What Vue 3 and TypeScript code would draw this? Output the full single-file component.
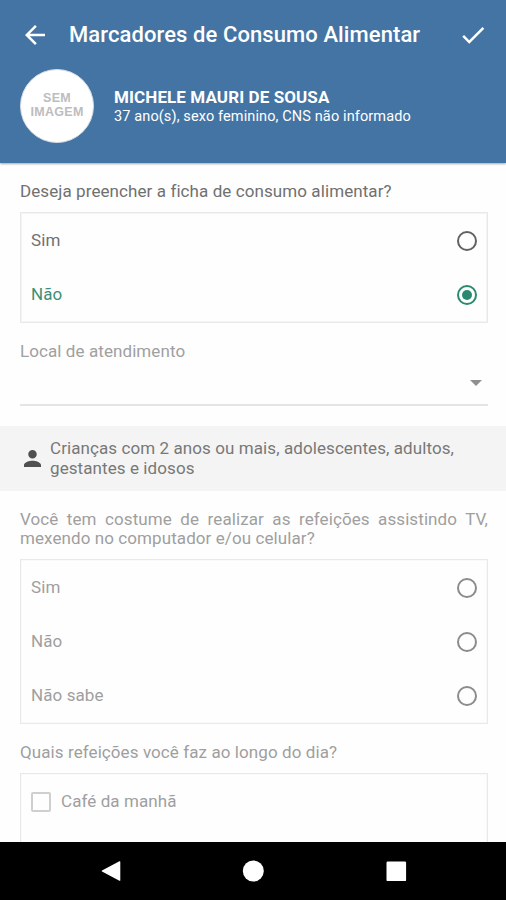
<script setup lang="ts">
import { ref } from 'vue'

interface Option {
  value: string
  label: string
}

const fillForm = ref<string>('nao')
const tvHabit = ref<string>('')
const meals = ref<string[]>([])

const fillOptions: Option[] = [
  { value: 'sim', label: 'Sim' },
  { value: 'nao', label: 'Não' },
]

const tvOptions: Option[] = [
  { value: 'sim', label: 'Sim' },
  { value: 'nao', label: 'Não' },
  { value: 'nao-sabe', label: 'Não sabe' },
]

const mealOptions: Option[] = [{ value: 'cafe', label: 'Café da manhã' }]
</script>

<template>
  <div class="screen">
    <header class="header">
      <div class="toolbar">
        <svg class="back" viewBox="0 0 24 24"><path d="M20 11H7.83l5.59-5.59L12 4l-8 8 8 8 1.41-1.41L7.83 13H20v-2z" /></svg>
        <h1 class="title">Marcadores de Consumo Alimentar</h1>
        <svg class="confirm" viewBox="0 0 24 24"><path d="M9 16.17L4.83 12l-1.42 1.41L9 19 21 7l-1.41-1.41z" /></svg>
      </div>
      <div class="patient">
        <div class="avatar"><span>SEM</span><span>IMAGEM</span></div>
        <div class="patient-info">
          <div class="patient-name">MICHELE MAURI DE SOUSA</div>
          <div class="patient-details">37 ano(s), sexo feminino, CNS não informado</div>
        </div>
      </div>
    </header>

    <main class="content">
      <section class="field">
        <p class="question">Deseja preencher a ficha de consumo alimentar?</p>
        <div class="box">
          <div
            v-for="option in fillOptions"
            :key="option.value"
            class="option"
            :class="{ selected: fillForm === option.value }"
            @click="fillForm = option.value"
          >
            <span>{{ option.label }}</span>
            <i class="radio"></i>
          </div>
        </div>
      </section>

      <section class="select">
        <p class="question">Local de atendimento</p>
        <div class="select-value"><i class="caret"></i></div>
      </section>

      <div class="band">
        <svg class="person" viewBox="4 4 16 16"><path d="M12 12c2.21 0 4-1.79 4-4s-1.79-4-4-4-4 1.79-4 4 1.79 4 4 4zm0 2c-2.67 0-8 1.34-8 4v2h16v-2c0-2.66-5.33-4-8-4z" /></svg>
        <p class="band-text">Crianças com 2 anos ou mais, adolescentes, adultos,<br />gestantes e idosos</p>
      </div>

      <section class="field disabled">
        <p class="question justified">Você tem costume de realizar as refeições assistindo TV, mexendo no computador e/ou celular?</p>
        <div class="box">
          <div
            v-for="option in tvOptions"
            :key="option.value"
            class="option"
            :class="{ selected: tvHabit === option.value }"
          >
            <span>{{ option.label }}</span>
            <i class="radio"></i>
          </div>
        </div>
      </section>

      <section class="field disabled">
        <p class="question">Quais refeições você faz ao longo do dia?</p>
        <div class="box tall">
          <div v-for="meal in mealOptions" :key="meal.value" class="option check-option">
            <i class="checkbox" :class="{ checked: meals.includes(meal.value) }"></i>
            <span>{{ meal.label }}</span>
          </div>
        </div>
      </section>
    </main>

    <nav class="navbar">
      <svg viewBox="0 0 24 24"><path d="M22.3 2.8v18.4q0 1-.9.5L4 12.6q-.9-.6 0-1.2L21.4 2.3q.9-.5.9.5z" /></svg>
      <svg viewBox="0 0 24 24"><circle cx="12.3" cy="12" r="10.5" /></svg>
      <svg viewBox="0 0 24 24"><rect x="2.5" y="2.5" width="19.6" height="19.6" rx="1.2" /></svg>
    </nav>
  </div>
</template>

<style>
body {
  margin: 0;
  background: #fefefe;
}
</style>

<style scoped>
.screen {
  width: 506px;
  height: 900px;
  display: flex;
  flex-direction: column;
  overflow: hidden;
  background: #fefefe;
  color: #707070;
  font-family: Roboto, 'Liberation Sans', sans-serif;
  font-size: 17px;
  line-height: 19.5px;
  letter-spacing: 0.085px;
}
p,
h1 {
  margin: 0;
}
.header {
  flex: none;
  height: 163px;
  box-sizing: border-box;
  background: #4474a4;
  color: #fff;
  box-shadow: 0 1px 2px rgba(0, 0, 0, 0.35);
}
.toolbar {
  height: 69px;
  box-sizing: border-box;
  display: flex;
  align-items: center;
  padding: 1px 18px 0 20px;
}
.toolbar svg {
  flex: none;
  fill: #fff;
}
.back {
  width: 30px;
  height: 30px;
}
.confirm {
  width: 30px;
  height: 30px;
}
.title {
  flex: 1;
  padding-left: 19px;
  font-size: 22px;
  font-weight: 500;
  line-height: 28px;
  letter-spacing: 0.09px;
  white-space: nowrap;
}
.patient {
  display: flex;
  align-items: center;
  gap: 20px;
  padding-left: 20px;
}
.patient-info {
  padding-top: 2px;
}
.avatar {
  width: 74px;
  height: 74px;
  box-sizing: border-box;
  border: 1px solid #d5dbe3;
  border-radius: 50%;
  background: #fff;
  color: #bdbdbd;
  display: flex;
  flex-direction: column;
  align-items: center;
  justify-content: center;
  font: bold 12.5px/14px 'Liberation Sans', Arial, sans-serif;
  letter-spacing: 0.3px;
  padding-bottom: 2px;
}
.patient-name {
  font-size: 17px;
  font-weight: 700;
  line-height: 19px;
  letter-spacing: 0.1px;
}
.patient-details {
  font-size: 14.5px;
  line-height: 19px;
  letter-spacing: 0.12px;
}
.content {
  flex: 1;
  min-height: 0;
  overflow: hidden;
}
.field {
  padding: 19px 18px 0 20px;
}
.question {
  white-space: nowrap;
}
.justified {
  white-space: normal;
  text-align: justify;
}
.box {
  margin-top: 10.5px;
  box-sizing: border-box;
  border: 1px solid #e9e9e9;
  box-shadow: inset 0 0 0 1px #f4f4f4;
  padding: 0.6px 0 0.4px;
}
.option {
  height: 54px;
  display: flex;
  align-items: center;
  justify-content: space-between;
  padding: 0 10px;
}
.radio {
  width: 20px;
  height: 20px;
  box-sizing: border-box;
  border: 2px solid #626262;
  border-radius: 50%;
  display: flex;
  align-items: center;
  justify-content: center;
}
.selected {
  color: #3c8f76;
}
.selected .radio {
  border-color: #2a8a70;
}
.selected .radio::after {
  content: '';
  width: 10px;
  height: 10px;
  border-radius: 50%;
  background: #2a8a70;
}
.select {
  margin: 19px 18px 0 20px;
  color: #a0a0a0;
}
.select-value {
  height: 45px;
  box-sizing: border-box;
  border-bottom: 2px solid #e4e4e4;
  display: flex;
  align-items: center;
  justify-content: flex-end;
  padding: 1px 6px 0 0;
}
.caret {
  border: 6px solid transparent;
  border-top-color: #8f8f8f;
  border-bottom: 0;
}
.band {
  height: 64.5px;
  margin-top: 19.9px;
  background: #f4f4f4;
  display: flex;
  align-items: center;
  padding-left: 24px;
  gap: 9px;
}
.person {
  width: 17px;
  height: 17px;
  fill: #505050;
}
.band-text {
  color: #787878;
}
.disabled {
  color: #9f9f9f;
}
.disabled .radio {
  border-color: #8c8c8c;
}
.disabled .box {
  box-shadow: inset 0 0 0 1px #f9f9f9;
}
.check-option {
  justify-content: flex-start;
  gap: 10px;
}
.checkbox {
  width: 20px;
  height: 20px;
  box-sizing: border-box;
  border: 2px solid #cfcfcf;
  border-radius: 2px;
}
.tall {
  height: 200px;
}
.navbar {
  flex: none;
  height: 58px;
  background: #000;
  display: flex;
  align-items: center;
  justify-content: center;
  gap: 119px;
}
.navbar svg {
  width: 24px;
  height: 24px;
  fill: #fff;
}
</style>
